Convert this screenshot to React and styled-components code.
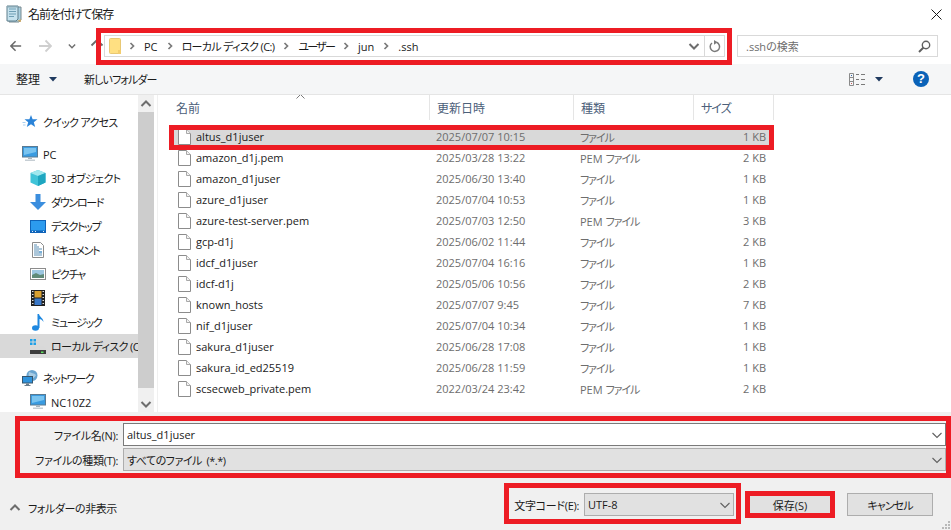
import React from "react"
import styled, { createGlobalStyle } from "styled-components"

const GlobalStyle = createGlobalStyle`
  html, body {
    margin: 0;
    padding: 0;
    background: #fff;
  }
  * {
    box-sizing: border-box;
  }
`

const files = [
  { name: "altus_d1juser", date: "2025/07/07 10:15", size: "1 KB", selected: true },
  { name: "amazon_d1j.pem", date: "2025/03/28 13:22", pem: true, size: "2 KB" },
  { name: "amazon_d1juser", date: "2025/06/30 13:40", size: "1 KB" },
  { name: "azure_d1juser", date: "2025/07/04 10:53", size: "1 KB" },
  { name: "azure-test-server.pem", date: "2025/07/03 12:50", pem: true, size: "3 KB" },
  { name: "gcp-d1j", date: "2025/06/02 11:44", size: "2 KB" },
  { name: "idcf_d1juser", date: "2025/07/04 16:16", size: "1 KB" },
  { name: "idcf-d1j", date: "2025/05/06 10:56", size: "2 KB" },
  { name: "known_hosts", date: "2025/07/07 9:45", size: "7 KB" },
  { name: "nif_d1juser", date: "2025/07/04 10:34", size: "1 KB" },
  { name: "sakura_d1juser", date: "2025/06/28 17:08", size: "1 KB" },
  { name: "sakura_id_ed25519", date: "2025/06/28 11:59", size: "1 KB" },
  { name: "scsecweb_private.pem", date: "2022/03/24 23:42", pem: true, size: "2 KB" },
]

const crumbs = [
  { label: "PC", ls: 0 },
  { label: "ローカル ディスク (C:)", ls: -0.65 },
  { label: "ユーザー", ls: -1.75 },
  { label: "jun", ls: 0 },
  { label: ".ssh", ls: 0 },
]

const Chevron = ({ color = "#606060", size = 12 }) => (
  <svg width={size} height={size} viewBox="0 0 12 12" fill="none">
    <path d="M1.500 4 6 8.500 10.500 4" stroke={color} strokeWidth="1.100" />
  </svg>
)

const BoldChevron = () => (
  <svg width="12" height="12" viewBox="0 0 12 12" fill="none">
    <path d="M1.500 4 6 8.500 10.500 4" stroke="#6d6d6d" strokeWidth="2" />
  </svg>
)

const FileIcon = () => (
  <svg width="13" height="16" viewBox="0 0 13 16">
    <path d="M.5.5h8l4 4v11H.5z" fill="#fff" stroke="#8c8c8c" />
    <path d="M8.500.5v4h4" fill="#f2f2f2" stroke="#a8a8a8" />
  </svg>
)

const NotepadIcon = () => (
  <svg width="16" height="18" viewBox="0 0 16 18">
    <path d="M3 2h12v13l-2 2H3z" fill="#a8cfe0" stroke="#7a8a90" />
    <path d="M1 1h11v13l-2 2H1z" fill="#c6e2ee" stroke="#5f7f8c" />
    <path d="M3 4h7M3 6.500h7M3 9h7M3 11.500h5" stroke="#6f9fb5" />
    <path d="M1 1h11v1.500H1z" fill="#88a8b5" />
    <path d="M11 16l4-2v3z" fill="#c9a86a" />
  </svg>
)

const StarIcon = () => (
  <svg width="16" height="14" viewBox="0 0 16 14">
    <path d="M9 0l1.600 4.300H15.500l-3.700 2.900 1.400 4.800L9 9.200 4.800 12l1.400-4.800L2.500 4.300h4.900z" fill="#2a83d8" />
    <path d="M.5 7.500h3M1 10h2.500" stroke="#a9cff0" />
  </svg>
)

const MonitorIcon = () => (
  <svg width="16" height="16" viewBox="0 0 16 16">
    <rect x=".5" y=".5" width="15" height="10.500" fill="#3a9be0" stroke="#5a7a92" />
    <path d="M2 2h12v4L2 9z" fill="#7ac4f0" />
    <path d="M6 11.500h4v1.500H6z" fill="#a8b4bc" />
    <path d="M3 13.500h10V15H3z" fill="#c6ced4" />
  </svg>
)

const CubeIcon = () => (
  <svg width="16" height="16" viewBox="0 0 16 16">
    <path d="M8 0l7.500 3v9.500L8 16 .5 12.500V3z" fill="#40c4d8" />
    <path d="M8 0l7.500 3L8 6 .5 3z" fill="#a0e8ee" />
    <path d="M8 6l7.500-3v9.500L8 16z" fill="#1ea6c0" />
  </svg>
)

const DownloadIcon = () => (
  <svg width="16" height="16" viewBox="0 0 16 16">
    <path d="M5.500 0h5v8H16l-8 8-8-8h5.500z" fill="#3b8ede" />
  </svg>
)

const DesktopIcon = () => (
  <svg width="16" height="13" viewBox="0 0 16 13">
    <rect width="16" height="13" fill="#0f63b8" />
    <rect x="1" y="1" width="14" height="9.500" fill="#2c9bee" />
    <path d="M2 11.500h1M5 11.500h1M13 11.500h1" stroke="#e0f0ff" />
  </svg>
)

const DocIcon = () => (
  <svg width="12" height="16" viewBox="0 0 12 16">
    <path d="M.5.5h8l3 3v12H.5z" fill="#fff" stroke="#8c8c8c" />
    <path d="M2 3h3M2 5h5M2 7h8M2 9h5M2 11h8M2 13h8" stroke="#5a8fb5" />
    <path d="M7 9h3v2H7z" fill="#7ab0d8" />
  </svg>
)

const PictureIcon = () => (
  <svg width="16" height="12" viewBox="0 0 16 12">
    <rect x=".5" y=".5" width="15" height="11" fill="#fff" stroke="#8c8c8c" />
    <rect x="2" y="2" width="12" height="8" fill="#9cc6e0" />
    <path d="M2 7l4-2 4 2 4-1v4H2z" fill="#5f8a78" />
  </svg>
)

const FilmIcon = () => (
  <svg width="14" height="16" viewBox="0 0 14 16">
    <rect width="14" height="16" fill="#222" />
    <path d="M1 1.500h1.500M1 4.500h1.500M1 7.500h1.500M1 10.500h1.500M1 13.500h1.500M11.500 1.500H13M11.500 4.500H13M11.500 7.500H13M11.500 10.500H13M11.500 13.500H13" stroke="#ddd" />
    <rect x="3.500" y="1" width="7" height="6.500" fill="#d8a030" />
    <rect x="3.500" y="8.500" width="7" height="6.500" fill="#3a78c8" />
  </svg>
)

const MusicIcon = () => (
  <svg width="12" height="17" viewBox="0 0 12 17">
    <ellipse cx="3.500" cy="14" rx="3.500" ry="2.800" fill="#1e88e0" />
    <path d="M5.500 0h1.500c.5 3 4.500 4 4.500 8-1-2-3-3-4-3v9H5.500z" fill="#1e88e0" />
  </svg>
)

const DriveIcon = () => (
  <svg width="16" height="15" viewBox="0 0 16 15">
    <path d="M0 0h2.500v2.500H0zM3.500 0H6v2.500H3.500zM0 3.500h2.500V6H0zM3.500 3.500H6V6H3.500z" fill="#1ea0e8" />
    <path d="M3 7h10l3 3v5H0v-5z" fill="#d8d8d8" />
    <path d="M0 11h16v4H0z" fill="#3c3c3c" />
    <rect x="11" y="12.500" width="2.500" height="1.500" fill="#5fe05f" />
  </svg>
)

const NetworkIcon = () => (
  <svg width="16" height="16" viewBox="0 0 16 16">
    <circle cx="10" cy="5.500" r="5.500" fill="#6aa5d0" />
    <path d="M7 2c2 1 5 1 7 3-1 3-4 3-5 5-2-2-3-5-2-8z" fill="#a8cce4" />
    <rect x=".5" y="6.500" width="10" height="6.500" fill="#2f93dc" stroke="#35566e" />
    <path d="M4 13.500h3V15H4zM2.500 15h6v1h-6z" fill="#6a7d8c" />
  </svg>
)

const FolderIcon = () => (
  <svg width="12" height="16" viewBox="0 0 12 16">
    <rect x=".5" y=".5" width="11" height="15" rx="1" fill="#ffe082" stroke="#e8c874" />
    <path d="M9 12h3v4H9z" fill="#f3cd6e" />
  </svg>
)

const SmallArrow = () => (
  <svg width="6" height="8" viewBox="0 0 6 8" fill="none">
    <path d="M1.500 1 4.500 4 1.500 7" stroke="#7a7a7a" strokeWidth="1.700" />
  </svg>
)

const NAV_ICON = {
  back: "M1 7h12M6.500 1.500 1 7l5.500 5.500",
  forward: "M13 7H1M7.500 1.500 13 7l-5.500 5.500",
  up: "M7 13V1M1.500 6.500 7 1l5.500 5.500",
}

const NavArrow = ({ kind, color }) => (
  <svg width="14" height="14" viewBox="0 0 14 14" fill="none">
    <path d={NAV_ICON[kind]} stroke={color} strokeWidth="1.800" />
  </svg>
)

const RefreshIcon = () => (
  <svg width="12" height="13" viewBox="0 0 12 13" fill="none">
    <path d="M7.500 2.300A4.700 4.700 0 1 1 3 3" stroke="#7a7a7a" strokeWidth="1.500" />
    <path d="M5 0l3.500 2.300L5 4.800z" fill="#7a7a7a" />
  </svg>
)

const SearchIcon = () => (
  <svg width="13" height="13" viewBox="0 0 13 13" fill="none">
    <circle cx="8" cy="5" r="3.700" stroke="#606060" strokeWidth="1.400" />
    <path d="M5.500 7.500 1 12" stroke="#606060" strokeWidth="2" />
  </svg>
)

const ViewIcon = () => (
  <svg width="17" height="13" viewBox="0 0 17 13" fill="none">
    <path d="M.5.500h4v12h-4zM.5 4.500h4M.5 8.500h4" stroke="#8a8a8a" />
    <path d="M7 1.500h3M12 1.500h4M7 6.500h3M12 6.500h4M7 11.500h3M12 11.500h4" stroke="#7a7a7a" />
    <path d="M2 2h1v1H2z" fill="#2f6ab0" />
    <path d="M2 10h1v1H2z" fill="#c85a5a" />
  </svg>
)

const CloseIcon = () => (
  <svg width="11" height="11" viewBox="0 0 11 11" fill="none">
    <path d="M.5.500l10 10M10.500.500l-10 10" stroke="#1a1a1a" strokeWidth="1" />
  </svg>
)

const Caret = ({ color = "#1f3a5f" }) => (
  <svg width="8" height="5" viewBox="0 0 8 5">
    <path d="M0 0h8L4 4.500z" fill={color} />
  </svg>
)

const App = () => {
  return (
    <>
      <GlobalStyle />
      <Dialog>
        <TitleBar>
          <NotepadIcon />
          <TitleText>名前を付けて保存</TitleText>
          <CloseButton><CloseIcon /></CloseButton>
        </TitleBar>

        <NavBar>
          <NavButtons>
            <NavArrow kind="back" color="#6b6b6b" />
            <NavGap $w={16}><NavArrow kind="forward" color="#cfcfcf" /></NavGap>
            <NavGap $w={14}><BoldChevronSmall><BoldChevron /></BoldChevronSmall></NavGap>
            <NavGap $w={12}><NavArrow kind="up" color="#6b6b6b" /></NavGap>
          </NavButtons>
          <AddressBox>
            <FolderIcon />
            <Crumbs>
              {crumbs.map((c) => (
                <React.Fragment key={c.label}>
                  <SmallArrow />
                  <Crumb $ls={c.ls}>{c.label}</Crumb>
                </React.Fragment>
              ))}
            </Crumbs>
            <AddressEnd>
              <BoldChevron />
              <AddressDivider />
              <RefreshIcon />
            </AddressEnd>
          </AddressBox>
          <SearchBox>
            <SearchText>.sshの検索</SearchText>
            <SearchIcon />
          </SearchBox>
        </NavBar>

        <Toolbar>
          <ToolLabel>整理</ToolLabel>
          <CaretWrap><Caret /></CaretWrap>
          <NewFolder>新しいフォルダー</NewFolder>
          <ToolRight>
            <ViewIcon />
            <CaretWrap><Caret /></CaretWrap>
            <HelpBadge>?</HelpBadge>
          </ToolRight>
        </Toolbar>

        <Main>
          <Sidebar>
            <NavTree>
              <TreeRow><IconSlot><StarIcon /></IconSlot><TreeLabel $ls={-0.7}>クイック アクセス</TreeLabel></TreeRow>
              <TreeRow $group><IconSlot><MonitorIcon /></IconSlot><TreeLabel $ls={0}>PC</TreeLabel></TreeRow>
              <TreeRow $child><IconSlot><CubeIcon /></IconSlot><TreeLabel $ls={-0.6}>3D オブジェクト</TreeLabel></TreeRow>
              <TreeRow $child><IconSlot><DownloadIcon /></IconSlot><TreeLabel>ダウンロード</TreeLabel></TreeRow>
              <TreeRow $child><IconSlot><DesktopIcon /></IconSlot><TreeLabel>デスクトップ</TreeLabel></TreeRow>
              <TreeRow $child><IconSlot><DocIcon /></IconSlot><TreeLabel>ドキュメント</TreeLabel></TreeRow>
              <TreeRow $child><IconSlot><PictureIcon /></IconSlot><TreeLabel>ピクチャ</TreeLabel></TreeRow>
              <TreeRow $child><IconSlot><FilmIcon /></IconSlot><TreeLabel>ビデオ</TreeLabel></TreeRow>
              <TreeRow $child><IconSlot><MusicIcon /></IconSlot><TreeLabel>ミュージック</TreeLabel></TreeRow>
              <TreeRow $child $active><IconSlot><DriveIcon /></IconSlot><TreeLabel $ls={-0.65}>ローカル ディスク (C:)</TreeLabel></TreeRow>
              <TreeRow $group><IconSlot><NetworkIcon /></IconSlot><TreeLabel>ネットワーク</TreeLabel></TreeRow>
              <TreeRow $child><IconSlot><MonitorIcon /></IconSlot><TreeLabel $ls={0}>NC10Z2</TreeLabel></TreeRow>
            </NavTree>
            <Scrollbar>
              <ScrollButton><ScrollUp><BoldChevron /></ScrollUp></ScrollButton>
              <ScrollThumb />
              <ScrollButton><BoldChevron /></ScrollButton>
            </Scrollbar>
          </Sidebar>

          <FileArea>
            <HeaderRow>
              <SortCaret>
                <svg width="9" height="5" viewBox="0 0 9 5" fill="none">
                  <path d="M.5 4.500l4-4 4 4" stroke="#7a7a7a" />
                </svg>
              </SortCaret>
              <HeaderCell $w={272} $pad={18}>名前</HeaderCell>
              <HeaderCell $w={144}>更新日時</HeaderCell>
              <HeaderCell $w={120}>種類</HeaderCell>
              <HeaderCell $w={80} $ls={-1}>サイズ</HeaderCell>
            </HeaderRow>
            {files.map((f) => (
              <FileRow key={f.name} $selected={f.selected}>
                <NameCell><FileIcon /><span>{f.name}</span></NameCell>
                <MetaCell>{f.date}</MetaCell>
                <MetaCell>{f.pem ? "PEM " : ""}<KanaText>ファイル</KanaText></MetaCell>
                <SizeCell>{f.size}</SizeCell>
              </FileRow>
            ))}
          </FileArea>
        </Main>

        <Footer>
          <FieldGrid>
            <FieldLabel>ファイル名(N):</FieldLabel>
            <NameInput>
              <span>altus_d1juser</span>
              <Chevron />
            </NameInput>
            <FieldLabel>ファイルの種類(T):</FieldLabel>
            <GreySelect>
              <SelectValue>すべてのファイル  (*.*)</SelectValue>
              <Chevron />
            </GreySelect>
          </FieldGrid>
          <ActionRow>
            <HideFolders>
              <HideChevron><BoldChevron /></HideChevron>
              <span>フォルダーの非表示</span>
            </HideFolders>
            <ActionRight>
              <EncodingLabel>文字コード(E):</EncodingLabel>
              <EncodingSelect>
                <span>UTF-8</span>
                <Chevron />
              </EncodingSelect>
              <DialogButton>保存(S)</DialogButton>
              <DialogButton $ls={-0.9}>キャンセル</DialogButton>
            </ActionRight>
          </ActionRow>
          <Grip>
            <svg width="8" height="8" viewBox="0 0 8 8">
              <path d="M6 0h2v2H6zM3 3h2v2H3zM6 3h2v2H6zM0 6h2v2H0zM3 6h2v2H3zM6 6h2v2H6z" fill="#b8b8b8" />
            </svg>
          </Grip>
        </Footer>

        <Callout $x={96} $y={28} $w={636} $h={37} />
        <Callout $x={169} $y={125} $w={605} $h={25} />
        <Callout $x={15} $y={416} $w={936} $h={62} />
        <Callout $x={504} $y={483} $w={237} $h={41} />
        <Callout $x={745} $y={491} $w={90} $h={27} />
      </Dialog>
    </>
  )
}

export default App

const Dialog = styled.div`
  position: relative;
  width: 951px;
  height: 530px;
  overflow: hidden;
  display: flex;
  flex-direction: column;
  background: #fff;
  color: #1a1a1a;
  font-family: "Open Sans", "Noto Sans CJK JP", sans-serif;
  font-size: 11px;
  font-feature-settings: "palt";
`
const TitleBar = styled.div`
  height: 28px;
  flex: none;
  display: flex;
  align-items: center;
  padding: 0 9px 0 6px;
`
const TitleText = styled.div`
  margin-left: 6px;
  font-size: 12px;
  letter-spacing: -1.1px;
`
const CloseButton = styled.div`
  margin-left: auto;
  display: flex;
`
const NavBar = styled.div`
  height: 36px;
  flex: none;
  display: flex;
  align-items: flex-start;
  padding-top: 7px;
`
const NavButtons = styled.div`
  width: 104px;
  height: 22px;
  padding-left: 10px;
  display: flex;
  align-items: center;
`
const NavGap = styled.div`
  margin-left: ${(p) => p.$w}px;
  display: flex;
`
const BoldChevronSmall = styled.div`
  transform: scale(0.7);
  display: flex;
`
const AddressBox = styled.div`
  width: 621px;
  height: 22px;
  border: 1px solid #d9d9d9;
  display: flex;
  align-items: center;
  padding-left: 4px;
`
const Crumbs = styled.div`
  display: flex;
  align-items: center;
  gap: 9px;
  margin-left: 8px;
`
const Crumb = styled.span`
  color: #1a1a1a;
  letter-spacing: ${(p) => p.$ls}px;
`
const AddressEnd = styled.div`
  margin-left: auto;
  height: 100%;
  display: flex;
  align-items: center;
  padding-right: 3px;
`
const AddressDivider = styled.div`
  width: 1px;
  height: 100%;
  background: #d9d9d9;
  margin: 0 4px;
`
const SearchBox = styled.div`
  width: 201px;
  height: 22px;
  margin-left: 12px;
  border: 1px solid #d9d9d9;
  display: flex;
  align-items: center;
  justify-content: space-between;
  padding: 0 6px 0 8px;
`
const SearchText = styled.span`
  color: #6d6d6d;
`
const Toolbar = styled.div`
  height: 31px;
  flex: none;
  display: flex;
  align-items: center;
  padding: 0 22px 0 16px;
  background: #f5f6f7;
  border-bottom: 1px solid #e5e5e5;
`
const ToolLabel = styled.span`
  font-size: 12px;
  width: 24px;
`
const CaretWrap = styled.div`
  display: flex;
  margin-left: 9px;
`
const NewFolder = styled.span`
  margin-left: 27px;
  letter-spacing: -0.9px;
`
const ToolRight = styled.div`
  margin-left: auto;
  display: flex;
  align-items: center;
`
const HelpBadge = styled.div`
  width: 16px;
  height: 16px;
  margin-left: 30px;
  border-radius: 50%;
  background: #0a62b8;
  color: #fff;
  font-family: "Liberation Sans", sans-serif;
  font-weight: 700;
  font-size: 13px;
  line-height: 16px;
  text-align: center;
`
const Main = styled.div`
  height: 317px;
  flex: none;
  display: flex;
  overflow: hidden;
`
const Sidebar = styled.div`
  width: 154px;
  flex: none;
  display: flex;
`
const NavTree = styled.div`
  width: 138px;
  flex: none;
  padding-top: 15px;
  overflow: hidden;
`
const TreeRow = styled.div`
  height: 24px;
  display: flex;
  align-items: center;
  white-space: nowrap;
  padding-left: ${(p) => (p.$child ? 30 : 22)}px;
  margin-top: ${(p) => (p.$group ? 8 : 0)}px;
  background: ${(p) => (p.$active ? "#d9d9d9" : "transparent")};
`
const TreeLabel = styled.span`
  letter-spacing: ${(p) => (p.$ls === undefined ? -1.3 : p.$ls)}px;
`
const IconSlot = styled.div`
  width: 16px;
  height: 17px;
  margin-right: 5px;
  flex: none;
  display: flex;
  align-items: center;
  justify-content: center;
`
const Scrollbar = styled.div`
  width: 16px;
  flex: none;
  display: flex;
  flex-direction: column;
  background: #f0f0f0;
`
const ScrollButton = styled.div`
  height: 17px;
  flex: none;
  display: flex;
  align-items: center;
  justify-content: center;
`
const ScrollUp = styled.div`
  transform: rotate(180deg);
  display: flex;
`
const ScrollThumb = styled.div`
  flex: 1;
  background: #cdcdcd;
  margin-bottom: 7px;
`
const FileArea = styled.div`
  flex: 1;
  margin-left: 3px;
  border-left: 1px solid #f0f0f0;
  min-width: 0;
`
const HeaderRow = styled.div`
  position: relative;
  height: 25px;
  margin-bottom: 6px;
  display: flex;
`
const SortCaret = styled.div`
  position: absolute;
  left: 138px;
  top: -1px;
  display: flex;
`
const HeaderCell = styled.div`
  width: ${(p) => p.$w}px;
  flex: none;
  display: flex;
  align-items: center;
  padding-left: ${(p) => p.$pad || 7}px;
  color: #4c607a;
  font-size: 12px;
  letter-spacing: ${(p) => p.$ls || 0}px;
  border-right: 1px solid #e5e5e5;
`
const FileRow = styled.div`
  width: 600px;
  height: 21px;
  margin-left: 12px;
  display: grid;
  grid-template-columns: 259px 144px 120px 77px;
  align-items: center;
  background: ${(p) => (p.$selected ? "#d9d9d9" : "transparent")};
`
const NameCell = styled.div`
  display: flex;
  align-items: center;
  gap: 5px;
  padding-left: 8px;
`
const MetaCell = styled.div`
  color: #6d6d6d;
  padding-left: 7px;
`
const KanaText = styled.span`
  letter-spacing: -1.1px;
`
const SizeCell = styled.div`
  color: #6d6d6d;
  text-align: right;
  padding-right: 4px;
`
const Footer = styled.div`
  position: relative;
  flex: 1;
  background: #f0f0f0;
  padding-top: 11px;
`
const FieldGrid = styled.div`
  display: grid;
  grid-template-columns: 118px 823px;
  column-gap: 5px;
  row-gap: 2px;
  align-items: center;
`
const FieldLabel = styled.div`
  text-align: right;
  white-space: nowrap;
  letter-spacing: -0.3px;
`
const NameInput = styled.div`
  height: 23px;
  background: #fff;
  border: 1px solid #7a7a7a;
  display: flex;
  align-items: center;
  justify-content: space-between;
  padding: 0 2px 0 3px;
`
const GreySelect = styled(NameInput)`
  background: #e1e1e1;
  border-color: #adadad;
`
const SelectValue = styled.span`
  white-space: pre;
  letter-spacing: -0.5px;
`
const ActionRow = styled.div`
  margin-top: 22px;
  display: flex;
  align-items: center;
  padding-right: 18px;
`
const HideFolders = styled.div`
  display: flex;
  align-items: center;
  margin-left: 9px;
  gap: 7px;
  letter-spacing: -0.4px;
  position: relative;
  top: 3px;
`
const HideChevron = styled.div`
  transform: rotate(180deg);
  display: flex;
`
const ActionRight = styled.div`
  margin-left: auto;
  display: flex;
  align-items: center;
`
const EncodingLabel = styled.span`
  margin-right: 5px;
  white-space: nowrap;
  letter-spacing: -0.3px;
`
const EncodingSelect = styled(GreySelect)`
  width: 150px;
  margin-right: 13px;
`
const DialogButton = styled.div`
  width: 86px;
  height: 23px;
  background: #e1e1e1;
  border: 1px solid #adadad;
  display: flex;
  align-items: center;
  justify-content: center;
  letter-spacing: ${(p) => p.$ls || 0}px;
  & + & {
    margin-left: 14px;
  }
`
const Grip = styled.div`
  position: absolute;
  right: 1px;
  bottom: 1px;
  display: flex;
`
const Callout = styled.div`
  position: absolute;
  left: ${(p) => p.$x}px;
  top: ${(p) => p.$y}px;
  width: ${(p) => p.$w}px;
  height: ${(p) => p.$h}px;
  border: 5px solid #ed1c24;
  pointer-events: none;
`
